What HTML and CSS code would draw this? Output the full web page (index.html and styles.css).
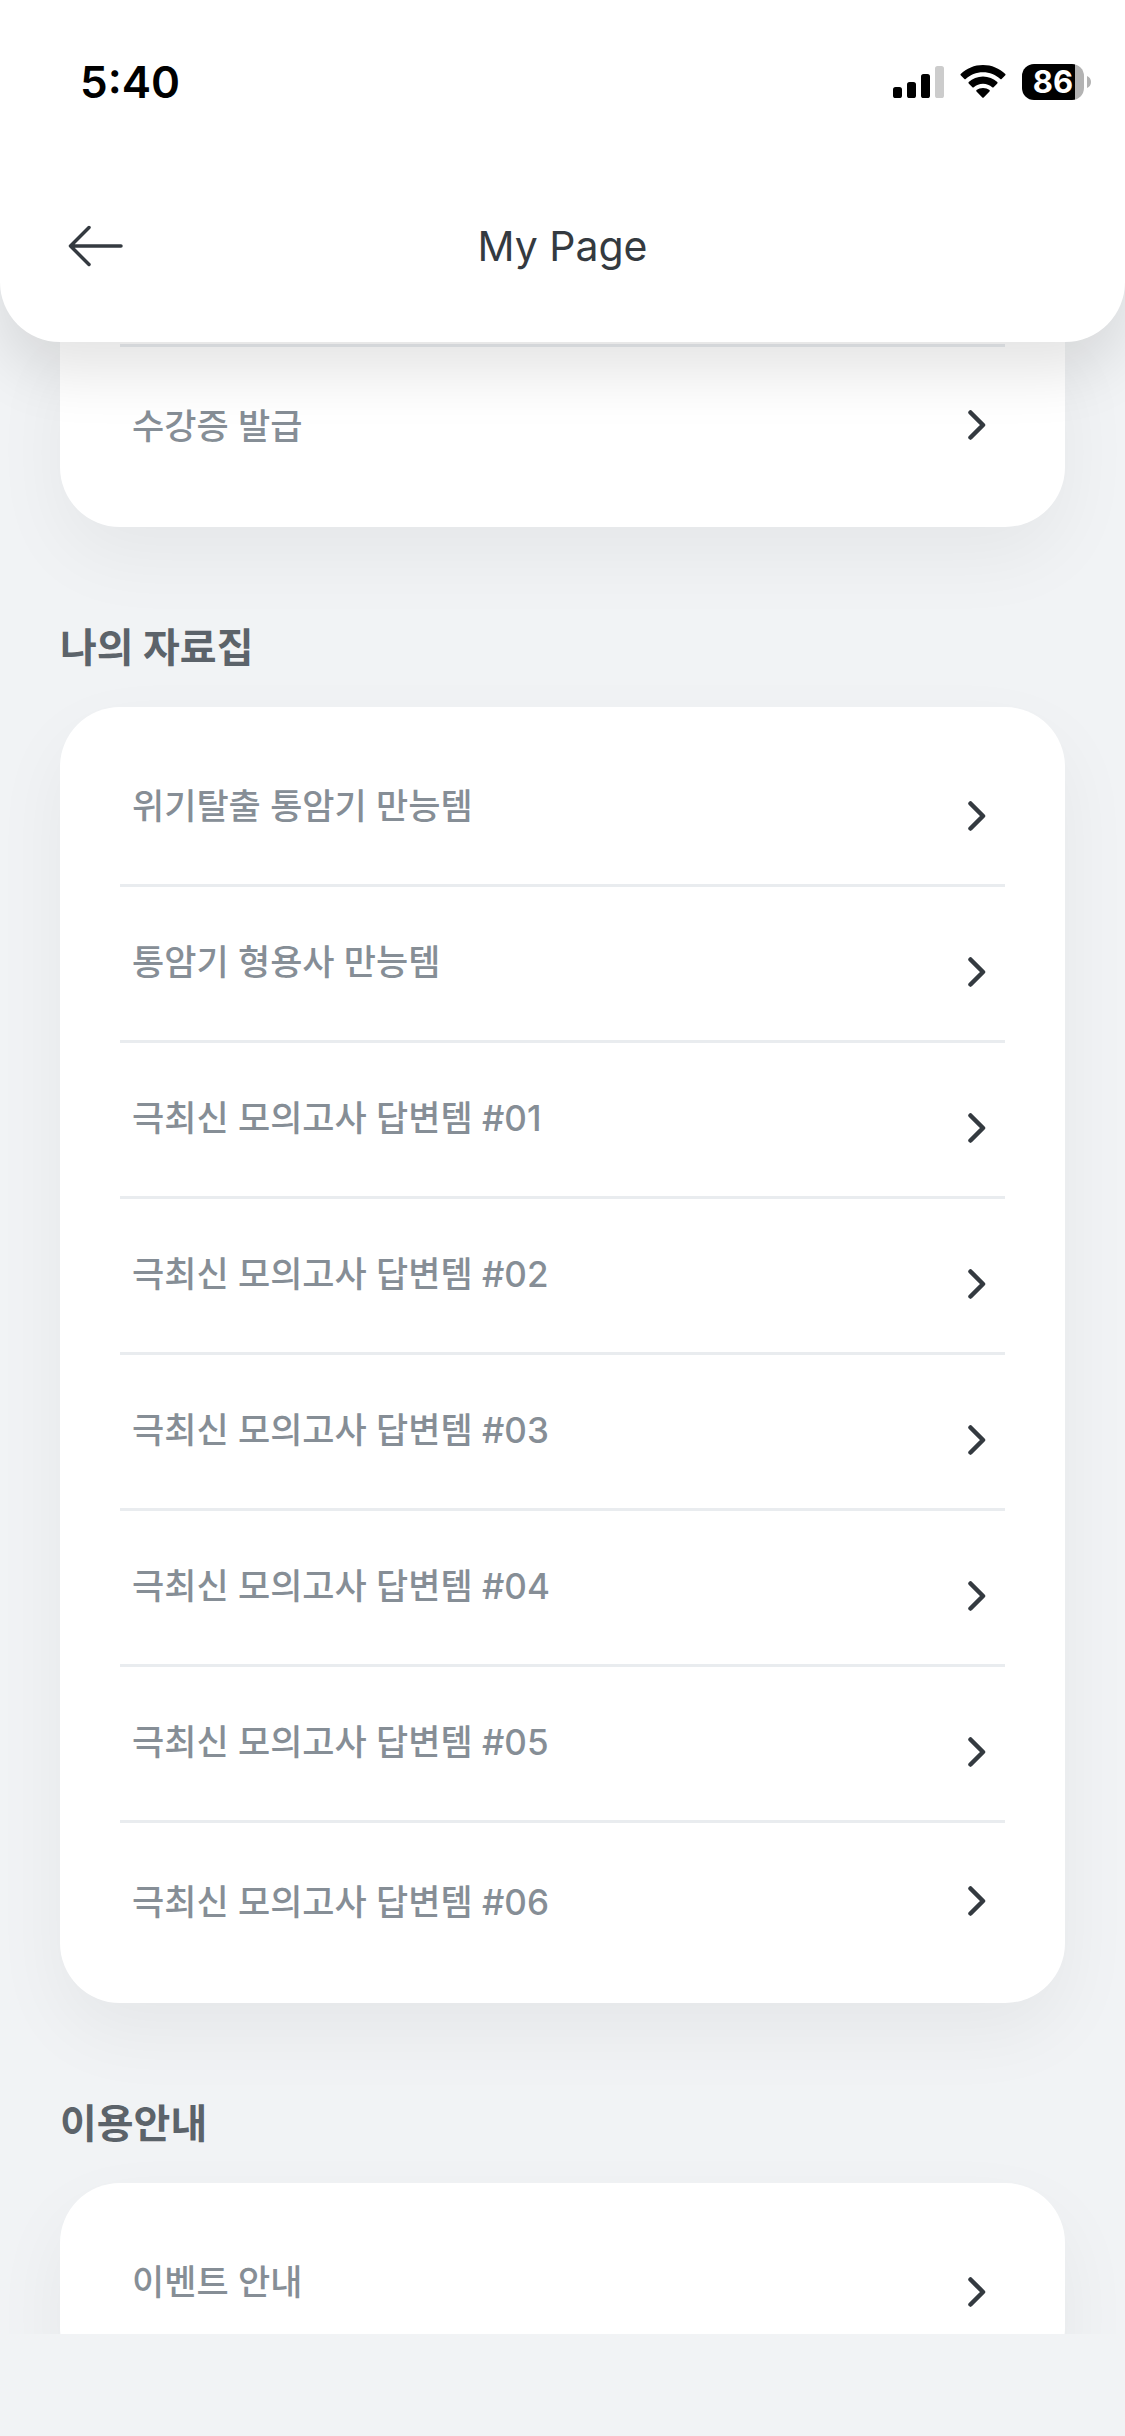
FILE: index.html
```html
<!DOCTYPE html>
<html lang="ko">
<head>
<meta charset="utf-8">
<meta name="viewport" content="width=device-width, initial-scale=1">
<title>My Page</title>
<link rel="stylesheet" href="styles.css">
</head>
<body>
<svg class="sprite" aria-hidden="true">
  <symbol id="chevron" viewBox="0 0 18 30">
    <path d="M2.5 2.5 15 15 2.5 27.5" fill="none" stroke="currentColor" stroke-width="4.500" stroke-linecap="round" stroke-linejoin="round"/>
  </symbol>
</svg>

<header class="header">
  <div class="status">
    <span class="status-time">5:40</span>
    <div class="status-icons">
      <svg class="signal" viewBox="0 0 51 32" aria-hidden="true">
        <rect x="0" y="21" width="9" height="11" rx="2.6"/>
        <rect x="14" y="16" width="9" height="16" rx="2.6"/>
        <rect x="28" y="8" width="9" height="24" rx="2.6"/>
        <rect x="42" y="0" width="9" height="32" rx="2.6" fill="#ccc"/>
      </svg>
      <svg class="wifi" viewBox="0 0 46 34" aria-hidden="true">
        <path d="M23 7.2c6.700 0 12.800 2.600 17.300 6.800.4.400.9.400 1.300 0l3.700-3.700c.4-.4.400-1 0-1.400C39.500 3.400 31.600 0 23 0S6.500 3.400.7 8.900c-.4.400-.4 1 0 1.400L4.400 14c.4.400.9.400 1.300 0C10.200 9.800 16.300 7.200 23 7.200z"/>
        <path d="M23 18.800c3.500 0 6.700 1.300 9.200 3.400.4.400 1 .400 1.400 0l3.700-3.700c.4-.4.400-1 0-1.400C33.500 13.700 28.500 11.600 23 11.600s-10.500 2.100-14.300 5.500c-.4.400-.4 1 0 1.400l3.700 3.700c.4.400 1 .400 1.400 0 2.500-2.100 5.700-3.400 9.200-3.400z"/>
        <path d="M29.500 26.500c.4-.4.400-1 0-1.400-1.800-1.400-4-2.200-6.500-2.200s-4.700.800-6.500 2.200c-.4.400-.4 1 0 1.400l5.800 6c.4.400 1 .400 1.400 0z"/>
      </svg>
      <div class="battery">
        <span class="battery-body">86</span>
        <svg class="battery-tip" viewBox="0 0 4 12" aria-hidden="true"><path d="M0 0c2.500 1 4 3.300 4 6s-1.500 5-4 6z" fill="#b3b3b3"/></svg>
      </div>
    </div>
  </div>
  <div class="toolbar">
    <button class="back" type="button" aria-label="뒤로">
      <svg viewBox="0 0 56 42" aria-hidden="true"><path d="M21 2.500 2.500 21 21 39.500M2.500 21H53" fill="none" stroke="currentColor" stroke-width="3.500" stroke-linecap="round" stroke-linejoin="round"/></svg>
    </button>
    <h1 class="title">My Page</h1>
  </div>
</header>

<main class="content">
  <ul class="card card-continued">
    <li class="row"><a href="#"><span class="label">수강증 발급</span><svg class="chevron" aria-hidden="true"><use href="#chevron"/></svg></a></li>
  </ul>

  <h2 class="section-title">나의 자료집</h2>
  <ul class="card">
    <li class="row divided"><a href="#"><span class="label">위기탈출 통암기 만능템</span><svg class="chevron" aria-hidden="true"><use href="#chevron"/></svg></a></li>
    <li class="row divided"><a href="#"><span class="label">통암기 형용사 만능템</span><svg class="chevron" aria-hidden="true"><use href="#chevron"/></svg></a></li>
    <li class="row divided"><a href="#"><span class="label">극최신 모의고사 답변템 #01</span><svg class="chevron" aria-hidden="true"><use href="#chevron"/></svg></a></li>
    <li class="row divided"><a href="#"><span class="label">극최신 모의고사 답변템 #02</span><svg class="chevron" aria-hidden="true"><use href="#chevron"/></svg></a></li>
    <li class="row divided"><a href="#"><span class="label">극최신 모의고사 답변템 #03</span><svg class="chevron" aria-hidden="true"><use href="#chevron"/></svg></a></li>
    <li class="row divided"><a href="#"><span class="label">극최신 모의고사 답변템 #04</span><svg class="chevron" aria-hidden="true"><use href="#chevron"/></svg></a></li>
    <li class="row divided"><a href="#"><span class="label">극최신 모의고사 답변템 #05</span><svg class="chevron" aria-hidden="true"><use href="#chevron"/></svg></a></li>
    <li class="row"><a href="#"><span class="label">극최신 모의고사 답변템 #06</span><svg class="chevron" aria-hidden="true"><use href="#chevron"/></svg></a></li>
  </ul>

  <h2 class="section-title">이용안내</h2>
  <ul class="card">
    <li class="row divided"><a href="#"><span class="label">이벤트 안내</span><svg class="chevron" aria-hidden="true"><use href="#chevron"/></svg></a></li>
  </ul>
</main>

<footer class="safe-area"></footer>
</body>
</html>
```
FILE: styles.css
```css
* {
  box-sizing: border-box;
}

body {
  display: flex;
  flex-direction: column;
  height: 100vh;
  margin: 0;
  overflow: hidden;
  background: #f1f3f5;
  color: #343a40;
  font-family: Inter, "Noto Sans CJK KR", sans-serif;
}

.sprite {
  display: none;
}

/* Header */
.header {
  position: relative;
  z-index: 1;
  flex: none;
  background: #fff;
  border-radius: 0 0 60px 60px;
  box-shadow: 0 30px 60px rgba(0, 0, 0, 0.11);
}

.status {
  display: flex;
  align-items: center;
  justify-content: space-between;
  height: 150px;
  padding: 14px 34px 0 80px;
  color: #000;
}

.status-time {
  font-size: 44px;
  font-weight: 600;
  line-height: 60px;
}

.status-icons {
  display: flex;
  align-items: center;
  gap: 16px;
}

.signal {
  width: 51px;
  height: 32px;
}

.wifi {
  width: 46px;
  height: 34px;
}

.battery {
  display: flex;
  align-items: center;
  gap: 3px;
}

.battery-body {
  width: 62px;
  height: 36px;
  border-radius: 12px;
  background: linear-gradient(to right, #000 53px, #b3b3b3 53px);
  color: #fff;
  font-size: 31px;
  font-weight: 700;
  line-height: 36px;
  text-align: center;
}

.battery-tip {
  width: 4px;
  height: 12px;
}

.toolbar {
  display: grid;
  grid-template-columns: 1fr auto 1fr;
  align-items: center;
  height: 192px;
  padding: 0 68px;
}

.back {
  width: 56px;
  height: 42px;
  padding: 0;
  border: 0;
  background: none;
  color: inherit;
}

.back svg {
  display: block;
  width: 56px;
  height: 42px;
}

.title {
  margin: 0;
  font-size: 41px;
  font-weight: 400;
  line-height: 60px;
}

.content {
  flex: 1;
  min-height: 0;
  padding: 0 60px;
  overflow: hidden;
}

.card {
  margin: 0;
  padding: 24px 60px;
  border-radius: 60px;
  background: #fff;
  box-shadow: 0 30px 75px rgba(0, 0, 0, 0.05);
  list-style: none;
}

.card-continued {
  padding-top: 2px;
  border-radius: 0 0 60px 60px;
}

.card-continued .row {
  border-top: 3px solid #e9ecef;
}

.section-title {
  margin: 91px 0 29px;
  color: #5c636a;
  font-size: 40px;
  font-weight: 700;
  line-height: 60px;
}

.row a {
  display: flex;
  align-items: center;
  justify-content: space-between;
  height: 156px;
  padding: 0 19px 0 12px;
  color: #868e96;
  text-decoration: none;
}

.divided a {
  border-bottom: 3px solid #e9ecef;
}

.label {
  padding-top: 2px;
  font-size: 35px;
  font-weight: 500;
  line-height: 48px;
}

.chevron {
  width: 18px;
  height: 30px;
  color: #343a40;
}

/* Rows above a divider seat the label high and the chevron low */
.divided .label {
  padding-bottom: 6px;
}

.divided .chevron {
  margin-top: 17px;
}

.safe-area {
  flex: none;
  height: 102px;
}
```
